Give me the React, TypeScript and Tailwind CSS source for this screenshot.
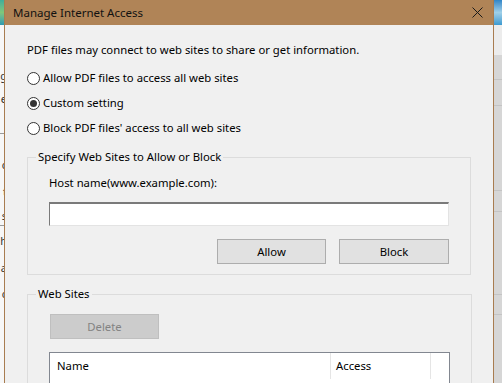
import React from 'react';

function Radio({ checked, label }: { checked?: boolean; label: string }) {
  return (
    <div className="flex items-center h-[16px]">
      <span className="w-[13px] h-[13px] rounded-full border border-[#333333] bg-white flex items-center justify-center">
        {checked && <span className="w-[7px] h-[7px] rounded-full bg-[#333333]" />}
      </span>
      <span className="ml-[3px]">{label}</span>
    </div>
  );
}

function Button({ children, disabled, className }: { children: React.ReactNode; disabled?: boolean; className?: string }) {
  return (
    <div
      className={`h-[25px] flex items-center justify-center border ${
        disabled ? 'bg-[#cccccc] border-[#bfbfbf] text-[#838383]' : 'bg-[#e1e1e1] border-[#adadad] text-black'
      } ${className ?? ''}`}
    >
      {children}
    </div>
  );
}

export default function App() {
  const leftBits = [
    { h: 'h-[40px]', t: '' },
    { h: 'h-[22px]', t: 'g' },
    { h: 'h-[24px]', t: 'e' },
    { h: 'h-[22px]', t: 'l' },
    { h: 'h-[20px]', t: '', line: true },
    { h: 'h-[24px]', t: 'c' },
    { h: 'h-[30px]', t: 't' },
    { h: 'h-[18px]', t: 's' },
    { h: 'h-[30px]', t: 'h', line: true },
    { h: 'h-[26px]', t: 'a' },
    { h: 'h-[26px]', t: 'c' },
  ];

  return (
    <div className="w-[502px] h-[383px] overflow-hidden flex bg-[#f0f0f0] text-[11.3px] leading-[16px] text-black font-['Noto_Sans',sans-serif]">
      {/* app behind, left edge */}
      <div className="w-[4px] shrink-0 flex flex-col overflow-hidden bg-[#f7f7f7]">
        <div className="h-[25px] shrink-0 bg-gradient-to-b from-[#3fae9a] via-[#7fc77a] to-[#2e9ab0]" />
        {leftBits.map((b, i) => (
          <div
            key={i}
            className={`${b.h} shrink-0 flex items-center justify-end text-[11px] text-[#333] ${b.line ? 'border-t border-[#9a9a9a]' : ''}`}
          >
            <span className="-mr-[3px]">{b.t}</span>
          </div>
        ))}
      </div>

      {/* dialog */}
      <div className="w-[490px] shrink-0 flex flex-col border-x border-[#a87c50] bg-[#f0f0f0]">
        <div className="h-[25px] shrink-0 bg-[#b08457] flex items-center justify-between pl-[8px] pr-[10px] text-[#111]">
          <span className="text-[11.5px]">Manage Internet Access</span>
          <svg width="11" height="11" viewBox="0 0 11 11" className="mb-[1px]">
            <path d="M0.5 0.5 L10.5 10.5 M10.5 0.5 L0.5 10.5" stroke="#1a1a1a" strokeWidth="1" />
          </svg>
        </div>

        <div className="pl-[22px] pr-[22px] flex flex-col">
          <p className="mt-[17px]">PDF files may connect to web sites to share or get information.</p>
          <div className="mt-[12px] flex flex-col gap-[9px]">
            <Radio label="Allow PDF files to access all web sites" />
            <Radio checked label="Custom setting" />
            <Radio label="Block PDF files' access to all web sites" />
          </div>

          <fieldset className="mt-[13px] w-[444px] border border-[#dcdcdc] pl-[21px] pr-[21px] pb-[10px]">
            <legend className="ml-[-13px] px-[2px]">Specify Web Sites to Allow or Block</legend>
            <div className="mt-[10px]">Host name(www.example.com):</div>
            <div className="mt-[11px] h-[24px] bg-white border-t-2 border-l border-t-[#7a7a7a] border-l-[#7a7a7a] border-r border-b border-r-[#e3e3e3] border-b-[#e3e3e3]" />
            <div className="mt-[13px] flex justify-end gap-[13px]">
              <Button className="w-[109px]">Allow</Button>
              <Button className="w-[110px]">Block</Button>
            </div>
          </fieldset>

          <fieldset className="mt-[11px] w-[444px] border border-[#dcdcdc] border-b-0 pl-[21px] pr-[21px] h-[100px]">
            <legend className="ml-[-13px] px-[2px]">Web Sites</legend>
            <Button disabled className="mt-[12px] ml-[1px] w-[109px]">Delete</Button>
            <div className="mt-[13px] w-[401px] h-[40px] bg-white border border-[#828790] border-b-0 flex">
              <div className="w-[281px] h-[26px] flex items-center pl-[7px] border-r border-[#e5e5e5]">Name</div>
              <div className="w-[100px] h-[26px] flex items-center pl-[5px] border-r border-[#e5e5e5]">Access</div>
            </div>
          </fieldset>
        </div>
      </div>

      {/* app behind, right edge */}
      <div className="w-[8px] shrink-0 flex flex-col bg-[#d6d6d6]">
        <div className="h-[25px] shrink-0 bg-gradient-to-b from-[#2f86c8] via-[#9fd0e8] to-[#3a9ad0]" />
        <div className="h-[30px] shrink-0 bg-[#ececec]" />
        <div className="h-[25px] shrink-0 border-b border-[#c4c4c4]" />
        <div className="h-[26px] shrink-0 border-b border-[#c4c4c4]" />
        <div className="h-[85px] shrink-0 border-b border-[#c4c4c4]" />
        <div className="h-[21px] shrink-0 border-b border-[#c4c4c4]" />
        <div className="h-[83px] shrink-0 border-b border-[#c4c4c4]" />
        <div className="h-[20px] shrink-0 border-b border-[#c4c4c4]" />
      </div>
    </div>
  );
}
